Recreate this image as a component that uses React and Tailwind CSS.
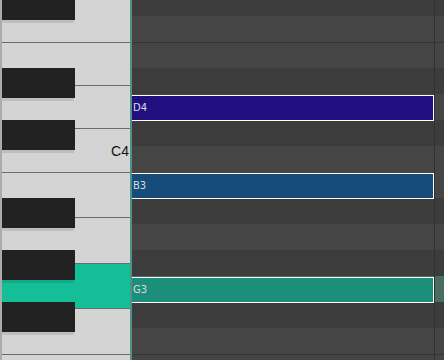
import React from "react";

// white keys: height includes the 1px line at the bottom
const whiteKeys = [
  { h: 43 },
  { h: 43 },
  { h: 43 },
  { h: 44, label: "C4" },
  { h: 45 },
  { h: 46 },
  { h: 45, active: true },
  { h: 46 },
  { h: 40 },
];

const blackKeys = [-10, 68, 120, 198, 250, 302];

// grid rows from F#4 down to E3, starting 10px above the top
const rows = [
  { name: "F#4", dark: true },
  { name: "F4" },
  { name: "E4", line: true },
  { name: "D#4", dark: true },
  { name: "D4", note: "bg-[#210f80]" },
  { name: "C#4", dark: true },
  { name: "C4" },
  { name: "B3", note: "bg-[#154c79]" },
  { name: "A#3", dark: true },
  { name: "A3" },
  { name: "G#3", dark: true },
  { name: "G3", note: "bg-[#1c8f7b]", active: true },
  { name: "F#3", dark: true },
  { name: "F3" },
  { name: "E3", line: true },
];

function Keyboard() {
  return (
    <div className="flex w-[132px] h-full shrink-0 border-l-2 border-[#ababab]">
      <div className="relative w-[128px] h-full flex flex-col overflow-hidden">
        {whiteKeys.map((k, i) => (
          <div
            key={i}
            style={{ height: k.h }}
            className={`relative shrink-0 border-b border-[#6c6c6c] ${
              k.active ? "bg-[#14bf98]" : "bg-[#d4d4d4]"
            }`}
          >
            {k.label && (
              <span className="absolute right-[1px] top-[15px] text-[14px] leading-none text-[#111] font-['Liberation_Sans',Arial,sans-serif]">
                {k.label}
              </span>
            )}
          </div>
        ))}
        {blackKeys.map((y) => (
          <div key={y} className="absolute left-0" style={{ top: y }}>
            <div className="w-[73px] h-[30px] bg-[#222222]" />
            <div className="w-[72px] h-[3px] bg-black/10" />
          </div>
        ))}
      </div>
      <div className="w-px h-full bg-[#7d7d7d]" />
      <div className="w-px h-full bg-[#22a88d]" />
    </div>
  );
}

function Grid() {
  return (
    <div className="relative flex-1 h-full overflow-hidden">
      <div className="-mt-[10px] flex flex-col">
        {rows.map((r) => (
          <div
            key={r.name}
            className={`relative h-[26px] shrink-0 ${
              r.line ? "border-t border-[#353535]" : ""
            } ${
              r.active ? "bg-[#4a6c61]" : r.dark ? "bg-[#3c3c3c]" : "bg-[#454545]"
            }`}
          >
            {r.note && (
              <div
                className={`absolute z-10 left-[-1px] top-[1px] w-[303px] h-[26px] border border-white flex items-center pl-[1px] ${r.note}`}
              >
                <span className="text-[10px] leading-none text-[#dcdcdc] font-['DejaVu_Sans',sans-serif]">
                  {r.name}
                </span>
              </div>
            )}
          </div>
        ))}
      </div>
      <div className="absolute z-20 top-0 left-[302px] w-px h-full bg-[#303030]" />
    </div>
  );
}

export default function App() {
  return (
    <div className="w-[444px] h-[360px] flex overflow-hidden bg-[#3c3c3c]">
      <Keyboard />
      <Grid />
    </div>
  );
}
